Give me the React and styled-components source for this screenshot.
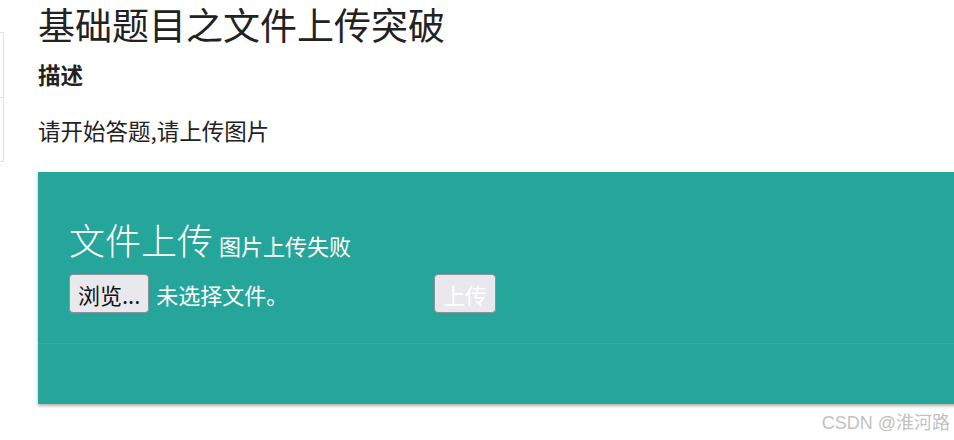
import React from 'react';
import styled, { createGlobalStyle } from 'styled-components';

const GlobalStyle = createGlobalStyle`
  html, body {
    margin: 0;
    padding: 0;
    background: #fff;
    overflow: hidden;
  }
  body {
    font-family: "Noto Sans CJK SC", "Noto Sans", sans-serif;
    color: #212121;
  }
`;

const Page = styled.div`
  display: flex;
  width: 954px;
  height: 440px;
  position: relative;
  overflow: hidden;
`;

const SideBox = styled.div`
  flex: none;
  width: 3px;
  margin-top: 32px;
  height: 128px;
  border: 1px solid #e0e0e0;
  border-left: none;
  display: flex;
  flex-direction: column;
`;

const SideCell = styled.div`
  flex: 1;
  & + & {
    border-top: 1px solid #e0e0e0;
  }
`;

const Main = styled.div`
  flex: 1;
  min-width: 0;
  padding-left: 34px;
`;

const Title = styled.h1`
  margin: 0;
  font-size: 37px;
  font-weight: 400;
  line-height: 48px;
  color: #222;
`;

const SubTitle = styled.h4`
  margin: 12px 0 0;
  font-size: 22.5px;
  font-weight: 700;
  line-height: 28px;
  color: #222;
`;

const Desc = styled.p`
  margin: 27px 0 0;
  font-size: 22.5px;
  line-height: 30px;
  color: #222;
`;

const Card = styled.div`
  margin-top: 27px;
  margin-right: -20px;
  background: #26a69a;
  color: #fff;
  box-shadow: 0 2px 3px rgba(0, 0, 0, 0.3);
`;

const CardContent = styled.div`
  padding: 44px 31px 30px;
  border-bottom: 1px solid rgba(255, 255, 255, 0.07);
`;

const CardTitle = styled.div`
  font-size: 36px;
  line-height: 46px;
  font-weight: 300;
`;

const Status = styled.span`
  font-size: 22px;
  font-weight: 400;
  margin-left: 6px;
`;

const UploadRow = styled.div`
  display: flex;
  align-items: center;
  margin-top: 6px;
`;

const FileField = styled.div`
  display: flex;
  align-items: center;
  width: 365px;
`;

const Button = styled.button`
  height: 39px;
  padding: 0 8px;
  font-family: inherit;
  font-size: 22px;
  line-height: 1;
  border: 1px solid #8f8f9d;
  border-radius: 4px;
  background: #e9e9ed;
  color: ${(p) => (p.$muted ? '#fff' : '#111')};
`;

const FileName = styled.span`
  margin-left: 7px;
  font-size: 22px;
`;

const CardAction = styled.div`
  height: 60px;
`;

const Watermark = styled.div`
  position: absolute;
  right: 4px;
  bottom: 6px;
  font-family: "Liberation Sans", "Noto Sans CJK SC", sans-serif;
  font-size: 18px;
  color: #c2c2c2;
`;

export default function App() {
  return (
    <>
      <GlobalStyle />
      <Page>
        <SideBox>
          <SideCell />
          <SideCell />
        </SideBox>
        <Main>
          <Title>基础题目之文件上传突破</Title>
          <SubTitle>描述</SubTitle>
          <Desc>请开始答题,请上传图片</Desc>
          <Card>
            <CardContent>
              <CardTitle>
                文件上传<Status>图片上传失败</Status>
              </CardTitle>
              <UploadRow>
                <FileField>
                  <Button>浏览...</Button>
                  <FileName>未选择文件。</FileName>
                </FileField>
                <Button $muted disabled>上传</Button>
              </UploadRow>
            </CardContent>
            <CardAction />
          </Card>
        </Main>
        <Watermark>CSDN @淮河路</Watermark>
      </Page>
    </>
  );
}
